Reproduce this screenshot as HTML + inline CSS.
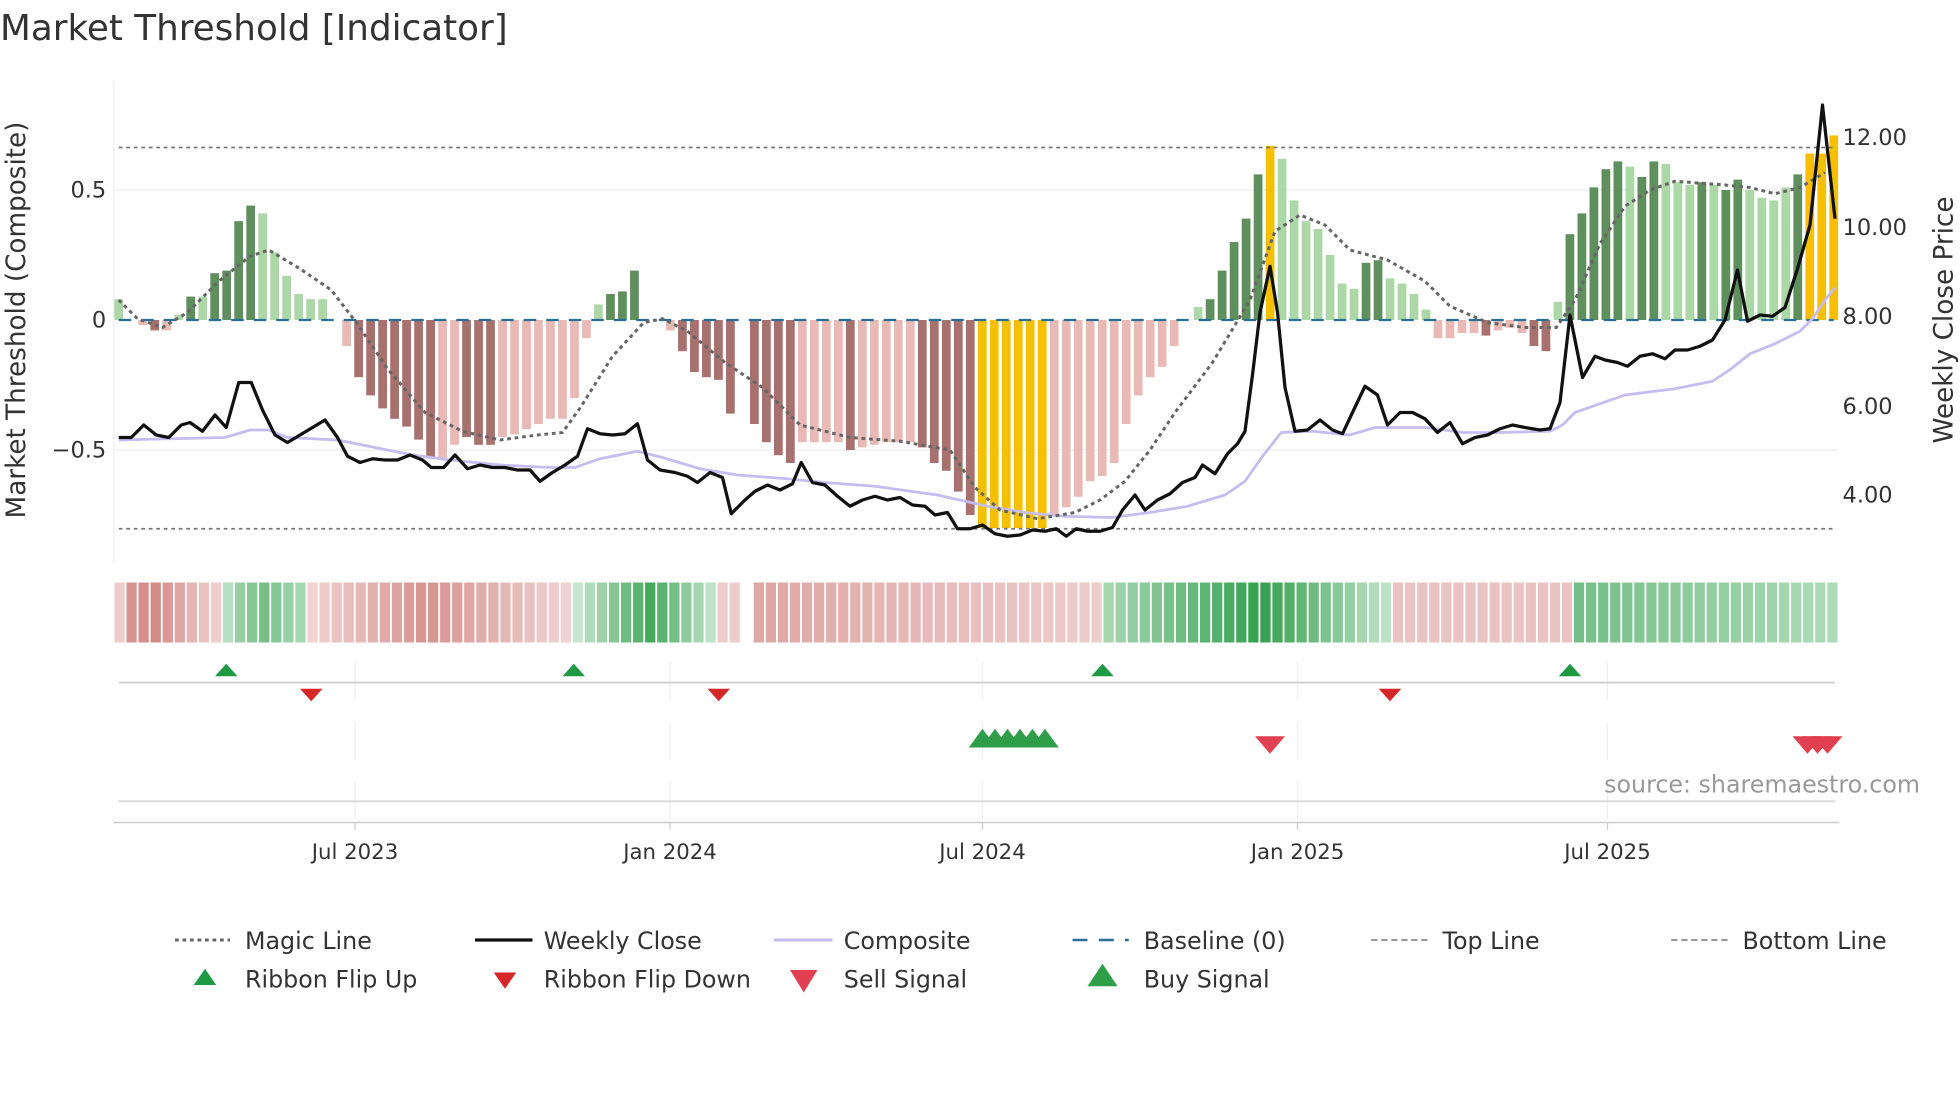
<!DOCTYPE html>
<html><head><meta charset="utf-8"><style>
html,body{margin:0;padding:0;background:#fff;width:1960px;height:1102px;overflow:hidden}
svg{display:block}
text{font-family:"DejaVu Sans","Liberation Sans",sans-serif;fill:#333}
</style></head><body>
<svg id="s" width="1960" height="1102" viewBox="0 0 1568 881.6" xmlns="http://www.w3.org/2000/svg">
<text x="0" y="32" font-size="28.6" style="fill:#333">Market Threshold [Indicator]</text>
<line x1="91" y1="65" x2="91" y2="450" stroke="#eee"/>
<line x1="91" y1="152" x2="1471" y2="152" stroke="#eceef0"/>
<line x1="91" y1="360" x2="1471" y2="360" stroke="#eceef0"/>
<g id="bars"></g>
<line x1="95" y1="118" x2="1466" y2="118" stroke="#777" stroke-width="1.4" stroke-dasharray="3,3"/>
<line x1="95" y1="423" x2="1466" y2="423" stroke="#777" stroke-width="1.4" stroke-dasharray="3,3"/>
<line x1="95" y1="256" x2="1467" y2="256" stroke="#2a6f97" stroke-width="1.8" stroke-dasharray="10,8"/>
<polyline id="comp" fill="none" stroke="#c6bcef" stroke-width="2.2"/>
<polyline id="magic" fill="none" stroke="#666" stroke-width="2.4" stroke-dasharray="3,3"/>
<polyline id="close" fill="none" stroke="#111" stroke-width="2.6" stroke-linejoin="round"/>
<g font-size="18">
<text x="85" y="158" text-anchor="end">0.5</text>
<text x="85" y="262" text-anchor="end">0</text>
<text x="85" y="366" text-anchor="end">−0.5</text>
<text x="1474" y="116">12.00</text>
<text x="1474" y="188">10.00</text>
<text x="1474" y="259">8.00</text>
<text x="1474" y="331">6.00</text>
<text x="1474" y="402">4.00</text>
</g>
<text transform="translate(20,256) rotate(-90)" text-anchor="middle" font-size="21">Market Threshold (Composite)</text>
<text transform="translate(1562,256) rotate(-90)" text-anchor="middle" font-size="21">Weekly Close Price</text>
<g id="rib"></g>
<g stroke="#eee">
<line x1="284" y1="530" x2="284" y2="560"/><line x1="536" y1="530" x2="536" y2="560"/><line x1="786" y1="530" x2="786" y2="560"/><line x1="1038" y1="530" x2="1038" y2="560"/><line x1="1286" y1="530" x2="1286" y2="560"/>
<line x1="284" y1="578" x2="284" y2="608"/><line x1="536" y1="578" x2="536" y2="608"/><line x1="786" y1="578" x2="786" y2="608"/><line x1="1038" y1="578" x2="1038" y2="608"/><line x1="1286" y1="578" x2="1286" y2="608"/>
<line x1="284" y1="625" x2="284" y2="655"/><line x1="536" y1="625" x2="536" y2="655"/><line x1="786" y1="625" x2="786" y2="655"/><line x1="1038" y1="625" x2="1038" y2="655"/><line x1="1286" y1="625" x2="1286" y2="655"/>
</g>
<line x1="95" y1="546" x2="1468" y2="546" stroke="#d0d0d0" stroke-width="1.5"/>
<line x1="95" y1="641" x2="1468" y2="641" stroke="#d8d8d8" stroke-width="1.5"/>
<line x1="91" y1="658" x2="1471" y2="658" stroke="#ccc" stroke-width="1.2"/>
<g id="tri"></g>
<text x="1536" y="634" text-anchor="end" font-size="19" style="fill:#999">source: sharemaestro.com</text>
<g font-size="17" text-anchor="middle">
<line x1="284" y1="658" x2="284" y2="664" stroke="#ccc"/><text x="284" y="687">Jul 2023</text>
<line x1="536" y1="658" x2="536" y2="664" stroke="#ccc"/><text x="536" y="687">Jan 2024</text>
<line x1="786" y1="658" x2="786" y2="664" stroke="#ccc"/><text x="786" y="687">Jul 2024</text>
<line x1="1038" y1="658" x2="1038" y2="664" stroke="#ccc"/><text x="1038" y="687">Jan 2025</text>
<line x1="1286" y1="658" x2="1286" y2="664" stroke="#ccc"/><text x="1286" y="687">Jul 2025</text>
</g>
<g font-size="19">
<line x1="140" y1="752" x2="184" y2="752" stroke="#666" stroke-width="2.4" stroke-dasharray="3,3"/><text x="196" y="759">Magic Line</text>
<line x1="380" y1="752" x2="426" y2="752" stroke="#111" stroke-width="2.6"/><text x="435" y="759">Weekly Close</text>
<line x1="619" y1="752" x2="666" y2="752" stroke="#c6bcef" stroke-width="2.4"/><text x="675" y="759">Composite</text>
<line x1="858" y1="752" x2="903" y2="752" stroke="#2a6f97" stroke-width="2" stroke-dasharray="12,9"/><text x="915" y="759">Baseline (0)</text>
<line x1="1097" y1="752" x2="1142" y2="752" stroke="#888" stroke-width="1.4" stroke-dasharray="5,3"/><text x="1154" y="759">Top Line</text>
<line x1="1337" y1="752" x2="1382" y2="752" stroke="#888" stroke-width="1.4" stroke-dasharray="5,3"/><text x="1394" y="759">Bottom Line</text>
<polygon points="155,788 173,788 164,775" fill="#1e9a45"/><text x="196" y="790">Ribbon Flip Up</text>
<polygon points="395,778 413,778 404,791" fill="#d62728"/><text x="435" y="790">Ribbon Flip Down</text>
<polygon points="632,776 654,776 643,794" fill="#e04050"/><text x="675" y="790">Sell Signal</text>
<polygon points="870,789 894,789 882,771" fill="#2e9e48"/><text x="915" y="790">Buy Signal</text>
</g>
</svg>
<script>
var NS="http://www.w3.org/2000/svg";
function el(p,t,a){var e=document.createElementNS(NS,t);for(var k in a)e.setAttribute(k,a[k]);p.appendChild(e);return e;}
var B=[[.08,'l'],[0,'l'],[-.02,'p'],[-.04,'r'],[-.04,'p'],[.02,'l'],[.09,'g'],[.09,'l'],[.18,'g'],[.19,'g'],[.38,'g'],[.44,'g'],[.41,'l'],[.26,'l'],[.17,'l'],[.1,'l'],[.08,'l'],[.08,'l'],[0,'l'],[-.1,'p'],
[-.22,'r'],[-.29,'r'],[-.34,'r'],[-.38,'r'],[-.41,'r'],[-.46,'r'],[-.53,'r'],[-.53,'p'],[-.48,'p'],[-.45,'r'],[-.48,'r'],[-.48,'r'],[-.45,'p'],[-.44,'p'],[-.42,'p'],[-.4,'p'],[-.38,'p'],[-.38,'p'],[-.3,'p'],[-.07,'p'],
[.06,'l'],[.1,'g'],[.11,'g'],[.19,'g'],[0,'l'],[0,'l'],[-.04,'p'],[-.12,'r'],[-.2,'r'],[-.22,'r'],[-.23,'r'],[-.36,'r'],[0,'p'],[-.4,'r'],[-.47,'r'],[-.52,'r'],[-.55,'r'],[-.47,'p'],[-.47,'p'],[-.47,'p'],
[-.47,'p'],[-.5,'r'],[-.49,'p'],[-.48,'p'],[-.47,'p'],[-.47,'p'],[-.47,'p'],[-.49,'r'],[-.55,'r'],[-.58,'r'],[-.66,'r'],[-.75,'r'],[-.8,'y'],[-.8,'y'],[-.8,'y'],[-.8,'y'],[-.8,'y'],[-.8,'y'],[-.75,'p'],[-.72,'p'],
[-.68,'p'],[-.62,'p'],[-.6,'p'],[-.55,'p'],[-.4,'p'],[-.29,'p'],[-.22,'p'],[-.18,'p'],[-.1,'p'],[0,'l'],[.05,'l'],[.08,'g'],[.19,'g'],[.3,'g'],[.39,'g'],[.56,'g'],[.67,'y'],[.62,'l'],[.46,'l'],[.38,'l'],
[.35,'l'],[.25,'l'],[.14,'l'],[.12,'l'],[.22,'g'],[.23,'g'],[.16,'l'],[.14,'l'],[.1,'l'],[.04,'l'],[-.07,'p'],[-.07,'p'],[-.05,'p'],[-.05,'p'],[-.06,'r'],[-.04,'p'],[-.03,'p'],[-.05,'p'],[-.1,'r'],[-.12,'r'],
[.07,'l'],[.33,'g'],[.41,'g'],[.51,'g'],[.58,'g'],[.61,'g'],[.59,'l'],[.55,'g'],[.61,'g'],[.6,'l'],[.53,'l'],[.52,'l'],[.53,'g'],[.52,'l'],[.5,'g'],[.54,'g'],[.5,'l'],[.47,'l'],[.46,'l'],[.51,'l'],
[.56,'g'],[.64,'y'],[.64,'y'],[.71,'y']];
var C={g:'#5e8f5c',l:'#acd7a6',r:'#a8716e',p:'#e9bab5',y:'#f6c000'};
var bg=document.getElementById('bars');
var sp=1372/(B.length-1);
B.forEach(function(b,i){var x=95+i*sp-3.5,v=b[0],h=Math.abs(v)*208;if(h<0.5)return;
el(bg,'rect',{x:x,y:v>0?256-h:256,width:7,height:h,fill:C[b[1]]});});
function pl(id,s){document.getElementById(id).setAttribute('points',s);}
pl('magic',"95,240 110,255 130,262 150,250 175,225 200,205 215,200 240,215 265,232 285,258 310,295 340,330 370,345 400,352 430,348 450,346 465,325 490,285 515,258 530,255 550,265 580,290 610,310 640,340 680,350 720,353 760,360 780,390 800,408 830,415 860,410 880,400 900,385 920,360 940,330 970,290 1000,240 1020,185 1040,172 1060,180 1080,200 1110,208 1140,225 1160,245 1190,258 1220,262 1245,262 1260,240 1280,195 1300,165 1320,152 1340,145 1380,148 1400,150 1420,155 1440,150 1460,138");
pl('comp',"95,352 180,350 200,344 215,344 230,350 270,352 300,358 330,364 360,368 400,372 440,374 460,374 480,367 510,361 530,366 560,375 590,380 630,383 660,386 700,389 750,396 790,405 820,410 850,413 890,414 920,410 950,405 980,396 996,385 1010,365 1025,346 1050,345 1080,348 1100,342 1140,342 1170,346 1200,346 1240,345 1250,340 1260,330 1300,316 1340,311 1370,305 1385,295 1400,283 1420,275 1440,265 1450,255 1460,240 1468,230");
pl('close',"95,350 105,350 115,340 125,348 135,350 145,340 152,338 162,345 172,332 181,342 191,306 201,306 210,328 220,348 230,354 240,348 250,342 260,336 270,350 278,365 288,370 298,367 308,368 318,368 328,364 338,368 345,374 355,374 364,364 374,375 384,372 394,374 404,374 414,376 424,376 432,385 442,378 452,372 462,365 470,343 480,347 490,348 500,347 510,339 518,368 528,376 540,378 550,381 558,386 568,378 578,382 585,411 596,400 604,393 614,388 624,392 634,387 641,370 650,386 660,388 670,397 680,405 690,400 700,397 710,400 720,398 730,404 740,405 748,412 758,410 766,423 776,423 786,420 796,427 806,429 816,428 826,424 836,425 845,423 853,429 861,423 870,425 880,425 890,422 898,408 908,396 916,408 926,400 936,395 946,386 956,382 962,372 972,379 982,363 990,355 996,345 1002,300 1008,250 1016,213 1022,250 1028,310 1036,345 1046,344 1056,336 1066,344 1074,347 1082,330 1092,309 1102,316 1110,340 1120,330 1130,330 1140,335 1150,346 1160,338 1170,355 1180,350 1190,348 1200,343 1210,340 1220,342 1232,344 1240,343 1248,322 1256,252 1266,302 1276,285 1284,288 1294,290 1302,293 1312,285 1322,283 1332,287 1340,280 1350,280 1360,277 1370,272 1380,256 1390,216 1398,257 1408,252 1418,253 1428,246 1438,215 1448,180 1458,84 1468,175");
var R=[];function seg(a,b,s,f){for(var i=a;i<=b;i++)R[i]=[s,f((i-a)/Math.max(1,b-a))];}
seg(0,0,-1,function(){return .2});
var r1=[.8,.85,.9,.75,.6,.45,.3,.2];for(var i=0;i<8;i++)R[1+i]=[-1,r1[i]];
var g1=[.2,.4,.5,.6,.5,.4,.3];for(i=0;i<7;i++)R[9+i]=[1,g1[i]];
seg(16,37,-1,function(t){return t<.45?.15+t/.45*.65:.8-(t-.45)/.55*.65});
seg(38,49,1,function(t){return t<.55?.1+t/.55*.8:.9-(t-.55)/.45*.75});
seg(50,51,-1,function(){return .2});
R[52]=null;
seg(53,81,-1,function(t){return .6-t*.4});
seg(82,105,1,function(t){return t<.55?.3+t/.55*.7:1-(t-.55)/.45*.85});
seg(106,120,-1,function(t){return .3});
seg(121,142,1,function(t){return .6-t*.35});
function mix(a,b,t){var o=[];for(var k=0;k<3;k++)o.push(Math.round(a[k]+(b[k]-a[k])*t));return 'rgb('+o+')';}
var rb=document.getElementById('rib');
for(i=0;i<143;i++){var c=R[i];if(!c)continue;
var col=c[0]<0?mix([244,224,224],[208,128,124],c[1]):mix([214,238,220],[52,160,78],c[1]);
el(rb,'rect',{x:91.5+i*9.65,y:466,width:8.2,height:48,fill:col});}
var tg=document.getElementById('tri');
[181,459,882,1256].forEach(function(x){el(tg,'polygon',{points:(x-9)+',541 '+(x+9)+',541 '+x+',531',fill:'#1e9a45'});});
[249,575,1112].forEach(function(x){el(tg,'polygon',{points:(x-9)+',551 '+(x+9)+',551 '+x+',561',fill:'#d62728'});});
[786,796,806,816,826,836].forEach(function(x){el(tg,'polygon',{points:(x-11)+',598 '+(x+11)+',598 '+x+',583',fill:'#2e9e48'});});
[1016,1446,1454,1462].forEach(function(x){el(tg,'polygon',{points:(x-12)+',589 '+(x+12)+',589 '+x+',603',fill:'#e04050'});});
</script>
</body></html>
